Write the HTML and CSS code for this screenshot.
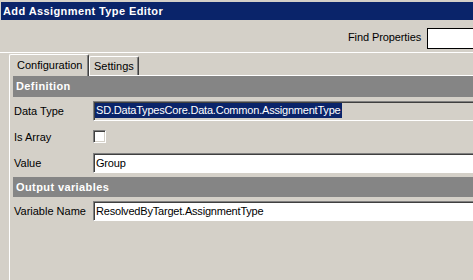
FILE: index.html
```html
<!DOCTYPE html>
<html>
<head>
<meta charset="utf-8">
<link rel="stylesheet" href="styles.css">
</head>
<body>
<div class="window">
  <div class="titlebar">Add Assignment Type Editor</div>
  <div class="toolbar">
    <span class="find-label">Find Properties</span>
    <div class="find-input"></div>
  </div>
  <div class="sep"></div>
  <div class="tabs">
    <div class="tab active">Configuration</div>
    <div class="tab">Settings</div>
  </div>
  <div class="panel">
    <div class="section">Definition</div>
    <div class="row row-first">
      <div class="label">Data Type</div>
      <div class="field readonly"><span class="sel">SD.DataTypesCore.Data.Common.AssignmentType</span></div>
    </div>
    <div class="row row-check">
      <div class="label">Is Array</div>
      <div class="check"></div>
    </div>
    <div class="row row-value">
      <div class="label">Value</div>
      <div class="field">Group</div>
    </div>
    <div class="section section-out">Output variables</div>
    <div class="row row-var">
      <div class="label">Variable Name</div>
      <div class="field">ResolvedByTarget.AssignmentType</div>
    </div>
  </div>
</div>
</body>
</html>
```

FILE: styles.css
```css
html, body {
  margin: 0;
  padding: 0;
  width: 473px;
  height: 280px;
  overflow: hidden;
  background: #d4d0c8;
  font-family: "Liberation Sans", Arial, sans-serif;
  font-size: 11px;
  color: #000;
}

.window {
  display: flex;
  flex-direction: column;
  height: 280px;
}

.titlebar {
  margin: 2px 0 0 1px;
  height: 18px;
  line-height: 18px;
  background: #0a246a;
  color: #fff;
  font-weight: bold;
  letter-spacing: 0.4px;
  padding-left: 2px;
  white-space: nowrap;
}

.toolbar {
  height: 32px;
  display: flex;
  align-items: flex-start;
  justify-content: flex-start;
  padding-left: 348px;
  box-sizing: border-box;
}

.find-label {
  margin-top: 11px;
  white-space: nowrap;
  letter-spacing: -0.1px;
}

.find-input {
  margin-top: 8px;
  margin-left: 6px;
  width: 80px;
  height: 21px;
  flex: none;
  background: #fff;
  border: 1px solid #000;
  box-sizing: border-box;
}

.sep {
  height: 1px;
  background: #fff;
}

.tabs {
  display: flex;
  align-items: flex-end;
  padding-left: 9px;
  margin-top: 1px;
  height: 21px;
}

.tab {
  height: 19px;
  box-sizing: border-box;
  border-top: 1px solid #fff;
  border-left: 1px solid #fff;
  border-right: 1px solid #404040;
  box-shadow: inset -1px 0 #808080;
  border-radius: 2px 2px 0 0;
  padding: 3px 0 0 4px;
  width: 50px;
  white-space: nowrap;
}

.tab.active {
  position: relative;
  z-index: 1;
  height: 22px;
  margin-bottom: -1px;
  width: 80px;
  padding: 4px 0 0 7px;
  background: #d4d0c8;
}

.panel {
  flex: 1;
  margin-left: 9px;
  border-top: 1px solid #fff;
  border-left: 1px solid #fff;
  padding-left: 3px;
  display: flex;
  flex-direction: column;
}

.section {
  height: 21px;
  line-height: 21px;
  background: #858585;
  color: #fff;
  font-weight: bold;
  letter-spacing: 0.4px;
  padding-left: 3px;
}

.section-out {
  margin-top: 4px;
  height: 20px;
  line-height: 20px;
}

.row {
  display: flex;
  align-items: center;
}

.label {
  width: 79px;
  padding-left: 1px;
  flex: none;
  white-space: nowrap;
}

.row-first {
  margin-top: 4px;
}

.row-check {
  margin-top: 9px;
}

.row-value {
  margin-top: 10px;
}

.row-var {
  margin-top: 4px;
}

.field {
  flex: 1;
  height: 20px;
  box-sizing: border-box;
  background: #fff;
  border-top: 1px solid #808080;
  border-left: 1px solid #808080;
  border-bottom: 1px solid #fff;
  box-shadow: inset 1px 1px #404040, 0 1px #d4d0c8;
  padding: 2px 0 0 2px;
  white-space: nowrap;
  overflow: hidden;
  line-height: 15px;
  letter-spacing: -0.2px;
}

.field.readonly {
  background: #d4d0c8;
  padding: 1px 0 0 1px;
}

.sel {
  display: inline-block;
  background: #0a246a;
  color: #fff;
  line-height: 15px;
  padding: 0 1px;
}

.check {
  width: 13px;
  height: 13px;
  box-sizing: border-box;
  background: #fff;
  border-top: 1px solid #808080;
  border-left: 1px solid #808080;
  border-right: 1px solid #fff;
  border-bottom: 1px solid #fff;
  box-shadow: inset 1px 1px #404040, inset -1px -1px #d4d0c8;
}
```
